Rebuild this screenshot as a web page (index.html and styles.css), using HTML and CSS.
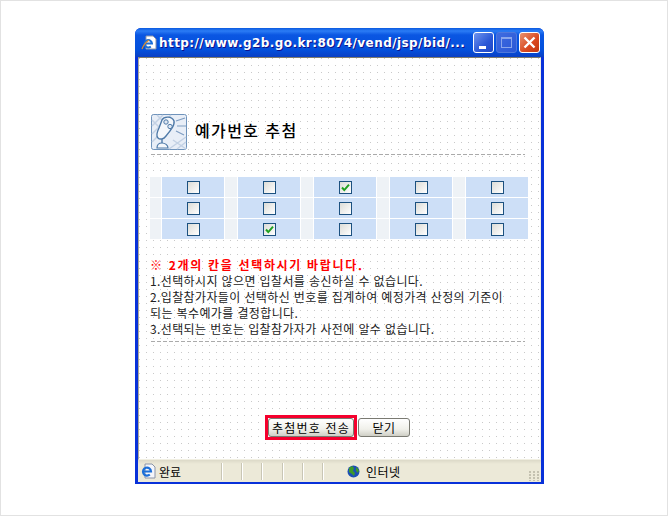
FILE: index.html
```html
<!DOCTYPE html>
<html lang="ko">
<head>
    <meta charset="UTF-8">
    <meta name="viewport" content="width=device-width, initial-scale=1.0">
    <title>예가번호 추첨</title>
    <link rel="stylesheet" href="styles.css">
</head>
<body>
    <div class="frame">
        <div class="window">
            <!-- Заголовок окна -->
            <div class="titlebar">
                <svg class="page-icon" viewBox="0 0 16 16" width="16" height="16">
                    <path d="M5 1h7l3 3v10H5z" fill="#fff" stroke="#8a94a8"/>
                    <path d="M4 8.5h7a3.7 3.7 0 1 0-1.2 3" fill="none" stroke="#1c6fd8" stroke-width="2"/>
                    <path d="M1 14c1-3 3-6 7-9" fill="none" stroke="#e08a2c" stroke-width="1.2"/>
                </svg>
                <span class="title-text">http://www.g2b.go.kr:8074/vend/jsp/bid/...</span>
                <div class="title-buttons">
                    <span class="win-btn"><i class="min-mark"></i></span>
                    <span class="win-btn off"><i class="max-mark"></i></span>
                    <span class="win-btn close">
                        <svg viewBox="0 0 21 21" width="21" height="21"><path d="M5.5 5.5l10 10M15.5 5.5l-10 10" stroke="#fff" stroke-width="2.4"/></svg>
                    </span>
                </div>
            </div>

            <div class="client">
                <div class="content">
                    <div class="head">
                        <svg class="head-icon" viewBox="0 0 36 36" width="36" height="36">
                            <rect x="0.5" y="0.5" width="35" height="35" rx="2" fill="#e8eef7" stroke="#6f93bb"/>
                            <path d="M1 12L12 1M1 20L20 1M1 28L9 20M1 6l14 14M6 1l6 6M18 35l17-12M26 35l9-7M22 26l13 9" stroke="#c3d1e4" stroke-width="1.5" fill="none"/>
                            <path d="M11 6C13 2 21 2 23 7C24 11 20 16 15 22C13 25 9 26 7 24C5 22 6 18 8 14z" fill="#f4f7fb" stroke="#4f7aa8" stroke-width="1.4"/>
                            <circle cx="15" cy="8" r="2.2" fill="#dfe8f3" stroke="#4f7aa8"/>
                            <circle cx="19" cy="12.5" r="2.2" fill="#dfe8f3" stroke="#4f7aa8"/>
                            <path d="M11 25v4" stroke="#4f7aa8" stroke-width="1.4"/>
                            <path d="M6 34c0-3 2-5 5-5s6 2 6 5z" fill="#f4f7fb" stroke="#4f7aa8" stroke-width="1.2"/>
                            <path d="M25 7l9-3M26 12h9M25 17l8 4" stroke="#7f9dc2" stroke-width="1.2"/>
                        </svg>
                        <h1 class="head-title">예가번호 추첨</h1>
                    </div>
                    <div class="dash-line"></div>

                    <div class="pick-grid">
                        <div class="spare"></div><div class="cell"><span class="check"></span></div>
                        <div class="spare"></div><div class="cell"><span class="check"></span></div>
                        <div class="spare"></div><div class="cell"><span class="check"><svg viewBox="0 0 11 11" width="11" height="11"><path d="M2 5.5l2.3 2.6L9 2.6" fill="none" stroke="#21a121" stroke-width="2"/></svg></span></div>
                        <div class="spare"></div><div class="cell"><span class="check"></span></div>
                        <div class="spare"></div><div class="cell"><span class="check"></span></div>

                        <div class="spare"></div><div class="cell"><span class="check"></span></div>
                        <div class="spare"></div><div class="cell"><span class="check"></span></div>
                        <div class="spare"></div><div class="cell"><span class="check"></span></div>
                        <div class="spare"></div><div class="cell"><span class="check"></span></div>
                        <div class="spare"></div><div class="cell"><span class="check"></span></div>

                        <div class="spare"></div><div class="cell"><span class="check"></span></div>
                        <div class="spare"></div><div class="cell"><span class="check"><svg viewBox="0 0 11 11" width="11" height="11"><path d="M2 5.5l2.3 2.6L9 2.6" fill="none" stroke="#21a121" stroke-width="2"/></svg></span></div>
                        <div class="spare"></div><div class="cell"><span class="check"></span></div>
                        <div class="spare"></div><div class="cell"><span class="check"></span></div>
                        <div class="spare"></div><div class="cell"><span class="check"></span></div>
                    </div>

                    <div class="notice">
                        <p class="notice-red">※ 2개의 칸을 선택하시기 바랍니다.</p>
                        <p>1.선택하시지 않으면 입찰서를 송신하실 수 없습니다.</p>
                        <p>2.입찰참가자들이 선택하신 번호를 집계하여 예정가격 산정의 기준이</p>
                        <p>되는 복수예가를 결정합니다.</p>
                        <p>3.선택되는 번호는 입찰참가자가 사전에 알수 없습니다.</p>
                    </div>
                    <div class="dash-line"></div>

                    <div class="actions">
                        <div class="mark-red"><button class="btn send">추첨번호 전송</button></div>
                        <button class="btn shut">닫기</button>
                    </div>
                </div>
            </div>

            <!-- Строка состояния -->
            <div class="statusbar">
                <svg class="ie-icon" viewBox="0 0 16 16" width="16" height="16">
                    <path d="M5 1h7l3 3v11H5z" fill="#f4f6fb" stroke="#8a94a8"/>
                    <path d="M3 8.5h8a4 4 0 1 0-1.2 3" fill="none" stroke="#1c6fd8" stroke-width="2.2"/>
                </svg>
                <span class="status-text">완료</span>
                <div class="status-seps">
                    <span></span><span></span><span></span><span></span><span></span><span></span>
                </div>
                <svg class="globe" viewBox="0 0 13 13" width="13" height="13">
                    <circle cx="6.5" cy="6.5" r="6" fill="#1c4fb4"/>
                    <path d="M2 3l3-2 2 2-1 3 2 2-1 3-2-2-3-2zM9 2l3 3-1 3-2-2z" fill="#3d9a2a"/>
                </svg>
                <span class="status-zone">인터넷</span>
                <div class="grip"></div>
            </div>
        </div>
    </div>
</body>
</html>
```

FILE: styles.css
```css
* {
    box-sizing: border-box;
}

body {
    margin: 0;
    background-color: #fff;
    font-family: 'Noto Sans CJK KR', 'Liberation Sans', sans-serif;
}

.frame {
    width: 668px;
    height: 516px;
    border: 1px solid #e2e2e2;
    padding-top: 27px;
    padding-left: 134px;
}

.window {
    width: 409px;
    height: 456px;
    display: flex;
    flex-direction: column;
    background-color: #0831d9;
    border-radius: 6px 6px 0 0;
    overflow: hidden;
}

/* Заголовок */
.titlebar {
    height: 29px;
    flex: none;
    display: flex;
    align-items: center;
    padding: 0 4px 0 6px;
    background: linear-gradient(to bottom, #0a5ae0 0, #2b7cf5 3px, #0a56e2 7px, #0350dc 22px, #0a3fc4 29px);
}

.page-icon {
    flex: none;
    margin-right: 2px;
}

.title-text {
    flex: 1;
    font-family: 'DejaVu Sans', sans-serif;
    font-size: 12px;
    font-weight: 700;
    letter-spacing: 0.43px;
    color: #fff;
    text-shadow: 1px 1px #0f1089;
    white-space: nowrap;
}

.title-buttons {
    display: flex;
    gap: 2px;
}

.win-btn {
    width: 21px;
    height: 21px;
    display: block;
    position: relative;
    border: 1px solid #fff;
    border-radius: 3px;
    background: linear-gradient(135deg, #6f94ee, #2a57d6 60%, #2047c4);
}

.win-btn.off {
    border-color: #4f78dc;
    background: linear-gradient(135deg, #3f6ce0, #2a57d6);
}

.win-btn.close {
    background: linear-gradient(135deg, #e9926f, #d9481f 60%, #c2360f);
}

.win-btn.close svg {
    display: block;
    margin: -1px;
}

.min-mark {
    position: absolute;
    left: 5px;
    bottom: 3px;
    width: 7px;
    height: 3px;
    background-color: #fff;
}

.max-mark {
    position: absolute;
    left: 4px;
    top: 4px;
    width: 11px;
    height: 11px;
    border: 1px solid #8aa6ec;
    border-top-width: 2px;
}

/* Содержимое */
.client {
    flex: 1;
    margin: 0 3px;
    border-top: 1px solid #7f7b6b;
    border-left: 1px solid #aca899;
    border-right: 1px solid #f1efe2;
    border-bottom: 1px solid #f1efe2;
    background-color: #c9c9c9;
    background-image:
        linear-gradient(to right, transparent 1px, #fff 1px),
        linear-gradient(to bottom, transparent 1px, #fff 1px);
    background-size: 7px 7px;
}

.content {
    padding: 56px 11px 0 11px;
}

.head {
    display: flex;
    align-items: center;
    gap: 8px;
    margin-left: 1px;
}

.head-icon {
    flex: none;
}

.head-title {
    margin: 0 0 3px;
    font-size: 16px;
    font-weight: 500;
    letter-spacing: 1.4px;
    line-height: 33px;
    color: #000;
}

.dash-line {
    height: 1px;
    width: 374px;
    margin-left: 1px;
    margin-top: 4px;
    background-image: repeating-linear-gradient(90deg, #aaa 0, #aaa 4px, transparent 4px, transparent 6px);
}

.pick-grid {
    margin-top: 22px;
    display: grid;
    grid-template-columns: 11px 62px repeat(4, 12px 62px);
    grid-auto-rows: 20px;
    gap: 1px;
    background-color: #fff;
    width: 378px;
}

.spare {
    background-color: #eef2f6;
}

.cell {
    background-color: #cddff7;
    display: flex;
    align-items: center;
    justify-content: center;
}

.check {
    width: 13px;
    height: 13px;
    display: block;
    border: 1px solid #1c5180;
    background: linear-gradient(135deg, #dcdcd7, #fff);
}

.check svg {
    display: block;
}

.notice {
    margin-top: 18px;
    font-size: 12px;
    letter-spacing: 0.38px;
    line-height: 16px;
    color: #222;
}

.notice p {
    margin: 0;
    white-space: nowrap;
}

.notice-red {
    color: #f00;
    font-weight: 700;
    letter-spacing: 1.68px;
}

.actions {
    margin-top: 73px;
    display: flex;
    align-items: center;
    padding-left: 115px;
    gap: 1px;
}

.mark-red {
    border: 3px solid #f5002d;
    display: flex;
}

.btn {
    height: 19px;
    padding: 0;
    border: 1px solid #7a7a72;
    border-radius: 3px;
    background: linear-gradient(to bottom, #fff, #f0f0ea 60%, #cfcfc6);
    font-family: 'Noto Sans CJK KR', sans-serif;
    font-size: 12px;
    line-height: 15px;
    color: #000;
}

.send {
    width: 86px;
    letter-spacing: 1.2px;
}

.shut {
    width: 52px;
    letter-spacing: 0.5px;
}

/* Строка состояния */
.statusbar {
    height: 22px;
    flex: none;
    margin: 0 3px 2px;
    display: flex;
    align-items: center;
    padding-left: 2px;
    position: relative;
    background: linear-gradient(to bottom, #dcd9c8, #ece9d8 4px);
    font-size: 12px;
    color: #000;
}

.ie-icon {
    flex: none;
}

.status-text {
    width: 65px;
    padding-left: 3px;
}

.status-seps {
    display: flex;
    width: 121px;
}

.status-seps span {
    width: 24px;
    height: 17px;
    border-left: 1px solid #c9c6b5;
    box-shadow: inset 1px 0 #fff;
}

.globe {
    flex: none;
    margin-left: 5px;
}

.status-zone {
    margin-left: 6px;
    letter-spacing: 0.4px;
}

.grip {
    position: absolute;
    right: 1px;
    bottom: 1px;
    width: 11px;
    height: 11px;
    background-image:
        linear-gradient(to bottom, #ece9d8 0, #ece9d8 1px, transparent 1px),
        linear-gradient(to right, #c4c1b0 0, #c4c1b0 2px, transparent 2px);
    background-size: 4px 3px, 4px 4px;
}
```
